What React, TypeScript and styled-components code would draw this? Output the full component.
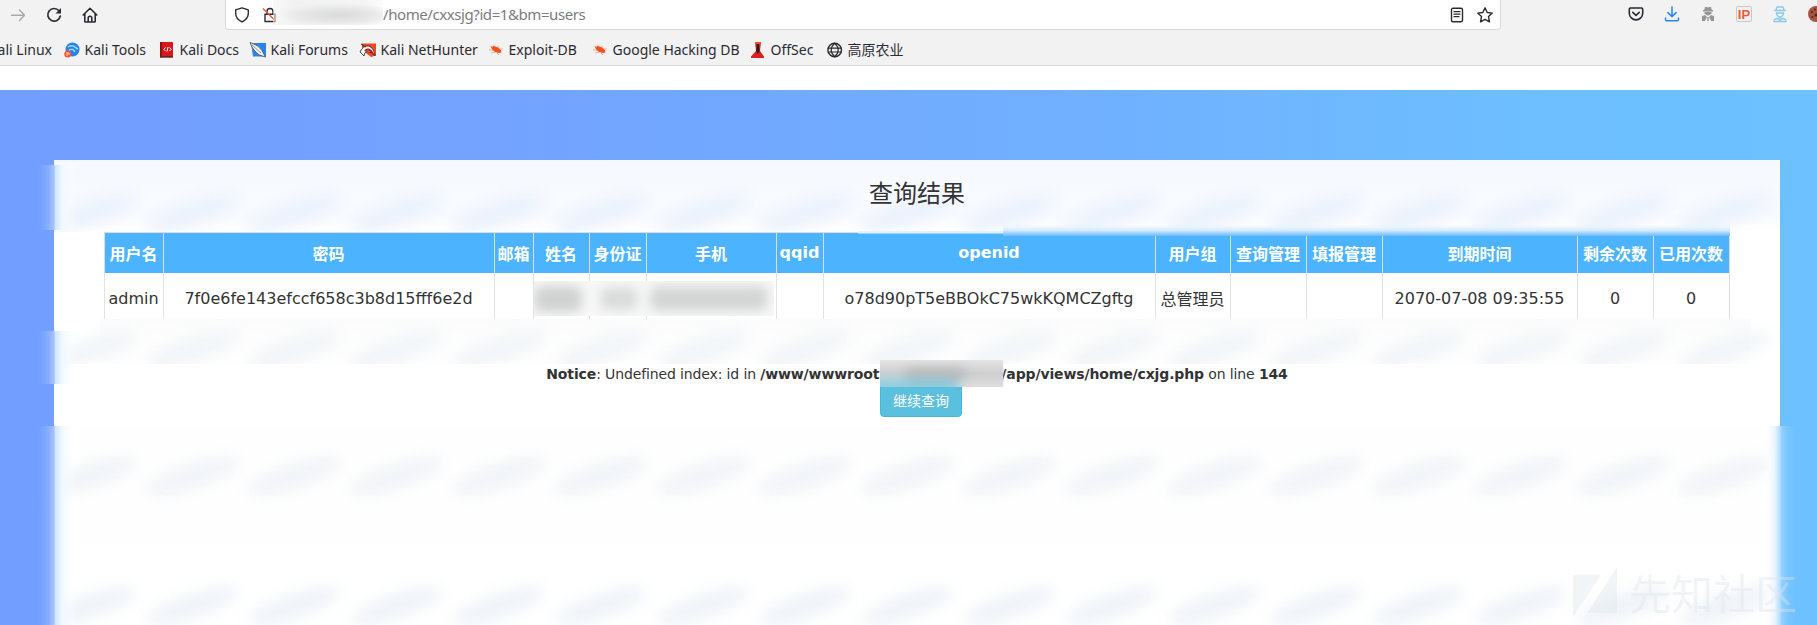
import React from "react";
import styled, { createGlobalStyle } from "styled-components";

const Global = createGlobalStyle`
  * { box-sizing: border-box; }
  body { margin: 0; background: #fff; overflow: hidden; }
`;

const Page = styled.div`
  width: 1817px;
  height: 625px;
  overflow: hidden;
  position: relative;
  display: flex;
  flex-direction: column;
  color: #333;
  font-family: "DejaVu Sans", "Noto Sans CJK SC", sans-serif;
`;

/* ---------- browser chrome ---------- */
const Chrome = styled.header`
  height: 66px;
  flex: none;
  background: #f2f2f2;
  border-bottom: 1px solid #d9d9dc;
  font-family: "Noto Sans", "Noto Sans CJK SC", sans-serif;
`;

const NavBar = styled.div`
  height: 30px;
  display: flex;
`;

const NavButtons = styled.div`
  width: 225px;
  flex: none;
  height: 29px;
  padding-left: 10px;
  display: flex;
  gap: 20px;
  align-items: center;
`;

const UrlBar = styled.div`
  width: 1276px;
  flex: none;
  height: 30px;
  padding: 0 7px 0 8px;
  display: flex;
  align-items: center;
  background: #fff;
  border: 1px solid #d9d9dc;
  border-top: 0;
  border-radius: 0 0 4px 4px;
`;

const HostMask = styled.div`
  width: 110px;
  height: 25px;
  margin: -5px 0 0 -5px;
  z-index: 1;
  background:
    radial-gradient(ellipse 62px 12px at 60% 60%, #d9dada 0%, rgba(225,225,225,.7) 55%, transparent 100%),
    linear-gradient(90deg, rgba(242,242,242,.5), #f1f1f1 20%, #f5f5f5 85%, rgba(252,252,252,.9));
`;

const UrlText = styled.span`
  flex: 1;
  padding-bottom: 1px;
  font-size: 15px;
  line-height: 20px;
  color: #7b7b80;
  letter-spacing: -0.42px;
`;

const UrlTools = styled.div`
  display: flex;
  gap: 12px;
`;

const Extensions = styled.div`
  height: 28px;
  margin-left: 127px;
  display: flex;
  gap: 20px;
  align-items: center;
  flex: none;
`;

const Icon = styled.svg`
  width: 16px;
  height: 16px;
  flex: none;
  display: block;
  overflow: visible;
`;

const LockIcon = styled(Icon)`
  margin-left: 12px;
`;

const Bookmarks = styled.nav`
  height: 35px;
  display: flex;
  align-items: center;
  padding-top: 5px;
`;

const Bookmark = styled.div<{ $w: number }>`
  width: ${(p) => p.$w}px;
  flex: none;
  display: flex;
  align-items: center;
  gap: 4.5px;
  font-size: 14px;
  line-height: 20px;
  color: #2b2a33;
  white-space: nowrap;
`;

const Clipped = styled(Bookmark)`
  justify-content: flex-end;
  padding-right: 12px;
`;

/* ---------- page ---------- */
const Backdrop = styled.main`
  flex: 1;
  margin-top: 24px;
  padding: 70px 37px 0 54px;
  background: linear-gradient(90deg, #729eff 0%, #73a2ff 25%, #70b0ff 60%, #6dbfff 85%, #6dc1ff 100%);
`;

const Panel = styled.section`
  height: 465px;
  padding: 0 50px;
  background: linear-gradient(#f5f9ff 0, #f8fbff 40px, #f8fbff 58px, #fff 72px);
`;

const Title = styled.h3`
  position: relative;
  z-index: 1;
  margin: 0;
  height: 72px;
  padding-top: 16px;
  font-size: 24px;
  font-weight: 400;
  line-height: 36px;
  text-align: center;
`;

const Table = styled.table`
  width: 1626px;
  table-layout: fixed;
  border-spacing: 0;
  border-top: 1px solid #ddd;
  border-right: 1px solid #ddd;
  font-size: 16px;
  text-align: center;
  white-space: nowrap;
`;

const Th = styled.th`
  height: 40px;
  padding: 0 1px 1px 0;
  border-left: 1px solid #ddd;
  background: #4cb4ff;
  color: #fff;
  font-weight: 700;
`;

const Td = styled.td`
  height: 50px;
  padding: 0 1px 0 0;
  border-left: 1px solid #e2e2e2;
`;

const Notice = styled.p`
  margin: 42px 0 0;
  height: 18px;
  font-size: 14px;
  line-height: 18px;
  letter-spacing: -0.13px;
  text-align: center;
  white-space: nowrap;
`;

const PathGap = styled.span`
  display: inline-block;
  width: 122px;
`;

const Actions = styled.div`
  padding-left: 8px;
  display: flex;
  justify-content: center;
`;

const Button = styled.button`
  width: 82px;
  height: 34px;
  padding: 0;
  border: 1px solid #46b8da;
  border-radius: 4px;
  background: #5bc0de;
  color: #fff;
  font-family: "DejaVu Sans", "Noto Sans CJK SC", sans-serif;
  font-size: 14px;
`;

/* ---------- overlays ---------- */
const Overlay = styled.svg`
  position: absolute;
  inset: 0;
  width: 1817px;
  height: 625px;
  pointer-events: none;
`;

const Watermark = styled.div`
  position: absolute;
  right: 20px;
  bottom: 5px;
  display: flex;
  align-items: center;
  gap: 11px;
  font-family: "Noto Sans CJK SC", sans-serif;
  font-size: 42px;
  line-height: 56px;
  color: rgba(222, 230, 236, 0.42);
`;

const columns: [string, number, string][] = [
  ["用户名", 59, "admin"],
  ["密码", 331, "7f0e6fe143efccf658c3b8d15fff6e2d"],
  ["邮箱", 39, ""],
  ["姓名", 56, ""],
  ["身份证", 57, ""],
  ["手机", 130, ""],
  ["qqid", 47, ""],
  ["openid", 332, "o78d90pT5eBBOkC75wkKQMCZgftg"],
  ["用户组", 75, "总管理员"],
  ["查询管理", 76, ""],
  ["填报管理", 76, ""],
  ["到期时间", 195, "2070-07-08 09:35:55"],
  ["剩余次数", 76, "0"],
  ["已用次数", 76, "0"],
];

const line = { fill: "none", stroke: "#2b2a33", strokeWidth: 1.4, strokeLinecap: "round", strokeLinejoin: "round" } as const;

const Bug = () => (
  <Icon viewBox="0 0 16 16">
    <path d="M3 5l3-1 4 1.500 3 2.500.500 2.500-2.500.500-4-1-3-2.500z" fill="#f4511e" />
    <path d="M1 8l4 0M3 11l4-1M5 2.500l2 2M10 4l1 2M12 7l3 0M9 11l2 2M2 4l3 1" stroke="#f7a58b" strokeWidth=".9" fill="none" />
  </Icon>
);

const smudgeRows = [
  { y: 213, o: 0.7, c: "#e6eefa" },
  { y: 350, o: 0.6, c: "#eaf0f6" },
  { y: 476, o: 0.8, c: "#edf1f6" },
  { y: 606, o: 0.8, c: "#ebf0f7" },
];

const leftEdges = [[165, 65], [331, 53], [426, 199]];

export default function App() {
  return (
    <Page>
      <Global />
      <Chrome>
        <NavBar>
          <NavButtons>
            <Icon viewBox="0 0 16 16"><path d="M1.5 8.2h13M9.5 3l5 5.2-5 5.2" {...line} stroke="#a9a9ab" /></Icon>
            <Icon viewBox="0 0 16 16"><path d="M13 3.8A6.3 6.3 0 1 0 14.3 9" {...line} strokeWidth={1.7} /><path d="M15 1v5.5H9.5z" fill="#2b2a33" /></Icon>
            <Icon viewBox="0 0 16 16"><path d="M1.2 8L8 1.3 14.8 8M2.8 6.8v7.5q0 .7.7.7h9q.7 0 .7-.7V6.8M6.2 15v-4q0-1.8 1.8-1.8T9.8 11v4" {...line} strokeWidth={1.6} /></Icon>
          </NavButtons>
          <UrlBar>
            <Icon viewBox="0 0 16 16"><path d="M8 .8l6.3 2.1v3.6c0 4.2-3 6.7-6.3 8.4-3.300-1.700-6.300-4.200-6.300-8.400V2.900z" {...line} /></Icon>
            <LockIcon viewBox="0 0 16 16">
              <path d="M3 7.300h10v7.200H3zM5 7V4.500a3 3 0 0 1 6 0V7" {...line} />
              <path d="M1 1.500l13 13" stroke="#f0512c" strokeWidth="1.300" />
            </LockIcon>
            <HostMask />
            <UrlText>/home/cxxsjg?id=1&amp;bm=users</UrlText>
            <UrlTools>
              <Icon viewBox="0 0 16 16"><rect x="2.500" y="1.300" width="11" height="13.400" rx="1.500" {...line} /><path d="M5 4.700h6M5 7.200h6M5 9.700h5" {...line} strokeWidth={1.200} /></Icon>
              <Icon viewBox="0 0 16 16"><path d="M8 .8l2.200 4.700 5.100.600-3.800 3.500 1 5.200L8 12.300l-4.500 2.500 1-5.200L.7 6.100l5.100-.6z" {...line} /></Icon>
            </UrlTools>
          </UrlBar>
          <Extensions>
            <Icon viewBox="0 0 16 16"><path d="M2.500 2h11q1.200 0 1.200 1.200v4a6.700 6.700 0 0 1-13.400 0v-4Q1.300 2 2.500 2zM4.800 6.300L8 9.300l3.200-3" {...line} strokeWidth={1.600} /></Icon>
            <Icon viewBox="0 0 16 16"><path d="M8 .8v9.500M4 6.600l4 4 4-4M1.500 12v1.500q0 1.200 1.200 1.200h10.600q1.200 0 1.200-1.200V12" {...line} stroke="#2a84f5" strokeWidth={1.500} /></Icon>
            <Icon viewBox="0 0 16 16" fill="#969696"><path d="M5 1h2l1 .8L9 1h2l.8 3H13v1.500H3V4h1.200zM4.500 6h7v1.800L8 9.800 4.500 7.800zM2 10l3-1 2 2-2 4H2zM14 10l-3-1-2 2 2 4h3zM7.300 11h1.400v4H7.300z" /></Icon>
            <Icon viewBox="0 0 16 16">
              <rect x=".5" y=".5" width="15" height="15" rx="1" fill="#f0f0f0" stroke="#c9c9c9" />
              <text x="8" y="12.500" textAnchor="middle" fontFamily="Liberation Sans" fontWeight="700" fontSize="13" fill="#f05a32">IP</text>
            </Icon>
            <Icon viewBox="0 0 16 16" fill="none" stroke="#8ccbea" strokeWidth="1.300"><path d="M4 4L5 1h6l1 3M2 4.500h12M4.500 6v2q1 3 3.500 3t3.500-3V6M4 7h8M8 11v2M2 15.500q0-3 4-3l2 2 2-2q4 0 4 3z" /></Icon>
            <Icon viewBox="0 0 16 16"><circle cx="8" cy="8" r="8" fill="#a65540" /><g fill="#4c2520"><circle cx="4" cy="6" r="1.100" /><circle cx="7" cy="3.500" r="1" /><circle cx="4.500" cy="11" r="1" /><circle cx="8" cy="9" r="1.500" /></g></Icon>
          </Extensions>
        </NavBar>
        <Bookmarks>
          <Clipped $w={64}>Kali Linux</Clipped>
          <Bookmark $w={95}>
            <Icon viewBox="0 0 16 16"><circle cx="8.500" cy="7.500" r="7" fill="#2383f3" /><path d="M4 5q5-3 8 1l2 1M5 8q4-2 6 2" stroke="#a9dcff" strokeWidth="1.400" fill="none" /><circle cx="3.800" cy="12" r="3.500" fill="#f0562d" /><path d="M3 10v4M3 11h2v2" stroke="#ffc9b5" fill="none" /></Icon>Kali Tools
          </Bookmark>
          <Bookmark $w={91}>
            <Icon viewBox="0 0 16 16"><rect x="1" y="0" width="13" height="15.500" rx="1" fill="#d4191d" /><path d="M1 0h2v15.500H1z" fill="#8d1114" /><path d="M1 14h13v1.500H1z" fill="#5b2a2a" /><path d="M6.500 5.500L4.800 7.300l1.700 1.700M10.500 5.500l1.700 1.800L10.500 9M9 5L8 9.500" stroke="#fff" fill="none" /></Icon>Kali Docs
          </Bookmark>
          <Bookmark $w={110}>
            <Icon viewBox="0 0 16 16"><path d="M1 1h15v13.500H3z" fill="#2684f5" /><path d="M0 .5q8 2 12 8l3.500 6.500-6-2Q3 9 0 .5z" fill="#f4f4f4" stroke="#444" strokeWidth=".8" /><path d="M2 3l9 8" stroke="#777" strokeWidth=".8" /></Icon>Kali Forums
          </Bookmark>
          <Bookmark $w={128}>
            <Icon viewBox="0 0 16 16"><path d="M2 1.500h14v12l-5 1.500L2 8z" fill="#f4481f" /><path d="M0 10Q3 3 9 4q5 2 6 10-3-5-6-4-4-2-5 4z" fill="#f2f2f2" stroke="#333" strokeWidth=".9" /><path d="M5 9q4-4 8 3" stroke="#b1191c" strokeWidth="2" fill="none" /><path d="M1 2l5 3" stroke="#333" /></Icon>Kali NetHunter
          </Bookmark>
          <Bookmark $w={104}><Bug />Exploit-DB</Bookmark>
          <Bookmark $w={158}><Bug />Google Hacking DB</Bookmark>
          <Bookmark $w={77}>
            <Icon viewBox="0 0 16 16"><path d="M5 0h6L10 9l4 5.500V16H1v-1.500L6 9z" fill="#d9201f" /><path d="M5 0h6v2H5z" fill="#f4511e" /><path d="M7 2h1.800l.8 7-1.700 3L6.200 9z" fill="#271e24" /></Icon>OffSec
          </Bookmark>
          <Bookmark $w={90}>
            <Icon viewBox="0 0 16 16"><circle cx="7.700" cy="8" r="6.800" {...line} /><path d="M1 6.200h13.400M1 10h13.400M7.700 1.200q-3.500 3-3.500 6.800t3.500 6.800M7.700 1.200q3.500 3 3.500 6.800t-3.500 6.800" {...line} strokeWidth={1.200} /></Icon>高原农业
          </Bookmark>
        </Bookmarks>
      </Chrome>

      <Backdrop>
        <Panel>
          <Title>查询结果</Title>
          <Table>
            <colgroup>{columns.map(([name, w]) => <col key={name} width={w} />)}</colgroup>
            <thead><tr>{columns.map(([name]) => <Th key={name}>{name}</Th>)}</tr></thead>
            <tbody><tr>{columns.map(([name, , value]) => <Td key={name}>{value}</Td>)}</tr></tbody>
          </Table>
          <Notice>
            <b>Notice</b>: Undefined index: id in <b>/www/wwwroot<PathGap />/app/views/home/cxjg.php</b> on line <b>144</b>
          </Notice>
          <Actions><Button>继续查询</Button></Actions>
        </Panel>
      </Backdrop>

      <Overlay viewBox="0 0 1817 625">
        <defs>
          <filter id="soft" x="-40%" y="-120%" width="180%" height="340%"><feGaussianBlur stdDeviation="7" /></filter>
          <filter id="grey" x="-20%" y="-80%" width="140%" height="260%"><feGaussianBlur stdDeviation="6" /></filter>
          <linearGradient id="left"><stop offset="0" stopColor="#79a4ff" stopOpacity="0" /><stop offset=".3" stopColor="#8bb0ff" /><stop offset=".43" stopColor="#a9c6ff" /><stop offset=".46" stopColor="#cfe6ff" /><stop offset=".62" stopColor="#eff8ff" /><stop offset="1" stopColor="#fff" stopOpacity="0" /></linearGradient>
          <linearGradient id="right"><stop offset="0" stopColor="#fff" stopOpacity="0" /><stop offset=".3" stopColor="#e9f6ff" /><stop offset=".42" stopColor="#bfe2ff" /><stop offset=".5" stopColor="#90d0ff" /><stop offset=".65" stopColor="#79c6ff" /><stop offset="1" stopColor="#6dc0ff" stopOpacity="0" /></linearGradient>
          <linearGradient id="glow" x2="0" y2="1"><stop offset="0" stopColor="#e6f3ff" stopOpacity="0" /><stop offset=".55" stopColor="#d3e9fc" /><stop offset=".75" stopColor="#a2d5fb" /><stop offset="1" stopColor="#68bdfe" /></linearGradient>
          <linearGradient id="band" x2="0" y2="1"><stop offset="0" stopColor="#fbfbfb" /><stop offset=".4" stopColor="#fdfdfd" /><stop offset="1" stopColor="#fefefe" /></linearGradient>
          <linearGradient id="mask" x2="0" y2="1"><stop offset="0" stopColor="#e4e4e4" /><stop offset=".5" stopColor="#cfcfcf" /><stop offset="1" stopColor="#dedede" /></linearGradient>
          <clipPath id="panel"><path d="M54 160H1780V232H54zM54 319H1780V364H54zM54 426H1780V625H54z" /></clipPath>
          <clipPath id="cells"><rect x="534" y="281" width="240" height="35" /></clipPath>
          <clipPath id="path"><rect x="880" y="360" width="123.500" height="27" /></clipPath>
        </defs>
        <rect x="100" y="319" width="1650" height="45" fill="url(#band)" />
        <rect x="80" y="426" width="1680" height="118" fill="#fefefe" />
        <g clipPath="url(#panel)">
          {smudgeRows.map((r) =>
            Array.from({ length: 17 }, (_, i) => (
              <ellipse key={`${r.y}-${i}`} cx={90 + i * 102.2} cy={r.y} rx="48" ry="12" fill={r.c} opacity={r.o} filter="url(#soft)" transform={`rotate(-18 ${90 + i * 102.2} ${r.y})`} />
            ))
          )}
        </g>
        {leftEdges.map(([y, h]) => <rect key={y} x="37" y={y} width="40" height={h} fill="url(#left)" />)}
        <rect x="1764" y="426" width="36" height="199" fill="url(#right)" />
        <rect x="858" y="231" width="146" height="2.500" fill="#e4f1fd" />
        <rect x="1003" y="224" width="727" height="12" fill="url(#glow)" />
        <g clipPath="url(#cells)">
          <rect x="534" y="281" width="240" height="35" fill="#f8f8f8" />
          <g filter="url(#grey)" fill="#cfd1d1">
            <rect x="534" y="286" width="48" height="26" rx="8" />
            <rect x="600" y="287" width="38" height="23" rx="8" opacity=".75" />
            <rect x="650" y="286" width="118" height="25" rx="8" opacity=".9" />
          </g>
        </g>
        <g clipPath="url(#path)">
          <rect x="880" y="360" width="123.500" height="27" fill="url(#mask)" />
          <g filter="url(#grey)"><rect x="905" y="369" width="60" height="10" fill="#b2b5b6" /><rect x="860" y="380" width="98" height="14" fill="#7fcbe0" /></g>
        </g>
      </Overlay>

      <Watermark>
        <svg width="45" height="51" viewBox="0 0 45 51"><path d="M0 8h28L0 50zM44 0v46H14z" fill="currentColor" /></svg>
        先知社区
      </Watermark>
    </Page>
  );
}
